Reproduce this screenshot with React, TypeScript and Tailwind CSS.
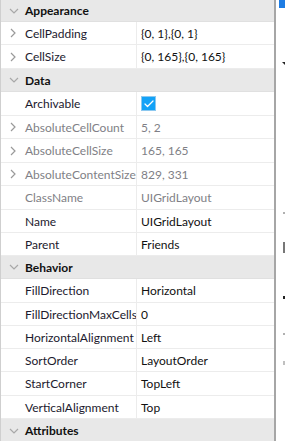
import { Check } from "lucide-react"

type Row =
  | { kind: "header"; label: string; h: number }
  | { kind: "prop"; label: string; value?: string; h: number; expand?: boolean; muted?: boolean; check?: boolean }

const rows: Row[] = [
  { kind: "header", label: "Appearance", h: 22 },
  { kind: "prop", label: "CellPadding", value: "{0, 1},{0, 1}", expand: true, h: 23 },
  { kind: "prop", label: "CellSize", value: "{0, 165},{0, 165}", expand: true, h: 24 },
  { kind: "header", label: "Data", h: 23 },
  { kind: "prop", label: "Archivable", check: true, h: 24 },
  { kind: "prop", label: "AbsoluteCellCount", value: "5, 2", expand: true, muted: true, h: 23 },
  { kind: "prop", label: "AbsoluteCellSize", value: "165, 165", expand: true, muted: true, h: 24 },
  { kind: "prop", label: "AbsoluteContentSize", value: "829, 331", expand: true, muted: true, h: 23 },
  { kind: "prop", label: "ClassName", value: "UIGridLayout", muted: true, h: 24 },
  { kind: "prop", label: "Name", value: "UIGridLayout", h: 23 },
  { kind: "prop", label: "Parent", value: "Friends", h: 23 },
  { kind: "header", label: "Behavior", h: 23 },
  { kind: "prop", label: "FillDirection", value: "Horizontal", h: 24 },
  { kind: "prop", label: "FillDirectionMaxCells", value: "0", h: 23 },
  { kind: "prop", label: "HorizontalAlignment", value: "Left", h: 23 },
  { kind: "prop", label: "SortOrder", value: "LayoutOrder", h: 23 },
  { kind: "prop", label: "StartCorner", value: "TopLeft", h: 24 },
  { kind: "prop", label: "VerticalAlignment", value: "Top", h: 23 },
  { kind: "header", label: "Attributes", h: 24 },
]

function ChevronRight() {
  return (
    <svg width="8" height="10" viewBox="0 0 8 10" className="shrink-0">
      <path d="M2 1l4 4-4 4" fill="none" stroke="#9a9a9a" strokeWidth="1.2" />
    </svg>
  )
}

function ChevronDown() {
  return (
    <svg width="10" height="8" viewBox="0 0 10 8" className="shrink-0">
      <path d="M1 2l4 4 4-4" fill="none" stroke="#a8a8a8" strokeWidth="1.2" />
    </svg>
  )
}

export default function App() {
  return (
    <div className="flex w-[285px] h-[441px] overflow-hidden bg-white font-['Lato',sans-serif] text-[12px]">
      <div className="w-[274px] shrink-0 border-l border-[#cfcfcf] flex flex-col">
        {rows.map((r, i) =>
          r.kind === "header" ? (
            <div
              key={i}
              style={{ height: r.h }}
              className="shrink-0 flex items-center bg-[#e8e8e8] border-b border-[#e0e0e0]"
            >
              <div className="w-[24px] flex justify-center pl-[2px]">
                <ChevronDown />
              </div>
              <span className="font-bold text-[12px] text-[#111] pt-[1px]">{r.label}</span>
            </div>
          ) : (
            <div
              key={i}
              style={{ height: r.h }}
              className="shrink-0 flex border-b border-[#ececec]"
            >
              <div className="w-[136px] shrink-0 flex items-center border-r border-[#ececec] overflow-hidden">
                <div className="w-[24px] shrink-0 flex justify-center">
                  {r.expand && <ChevronRight />}
                </div>
                <span className={"whitespace-nowrap pt-[1px] " + (r.muted ? "text-[#7f7f86]" : "text-[#1c1a2e]")}>
                  {r.label}
                </span>
              </div>
              <div className="flex-1 flex items-center pl-[4px]">
                {r.check ? (
                  <div className="w-[15px] h-[15px] bg-[#13a2f7] border border-[#8cc8ef] flex items-center justify-center">
                    <Check size={12} strokeWidth={2.5} color="white" />
                  </div>
                ) : (
                  <span className={"whitespace-nowrap pt-[1px] " + (r.muted ? "text-[#7f7f86]" : "text-[#111]")}>
                    {r.value}
                  </span>
                )}
              </div>
            </div>
          )
        )}
      </div>
      <div className="w-[2px] shrink-0 bg-[#a6a6a6]" />
      <div className="flex-1 relative bg-white">
        <div className="absolute left-[3px] top-0 w-[8px] h-[8px] bg-[#1d7ce3]" />
        <div className="absolute left-[6px] top-[62px] w-0 h-0 border-l-[4px] border-r-[4px] border-t-[4px] border-l-transparent border-r-transparent border-t-[#222]" />
        <div className="absolute left-[7px] top-[212px] w-[3px] h-[2px] bg-[#b0b0b0]" />
        <div className="absolute left-[7px] top-[242px] w-[3px] h-[11px] bg-[#777]" />
        <div className="absolute left-[7px] top-[296px] w-[3px] h-[3px] bg-[#222]" />
        <div className="absolute left-[7px] top-[333px] w-[3px] h-[2px] bg-[#b0b0b0]" />
        <div className="absolute left-[7px] top-[361px] w-[3px] h-[4px] bg-[#c0c0c0]" />
      </div>
    </div>
  )
}
